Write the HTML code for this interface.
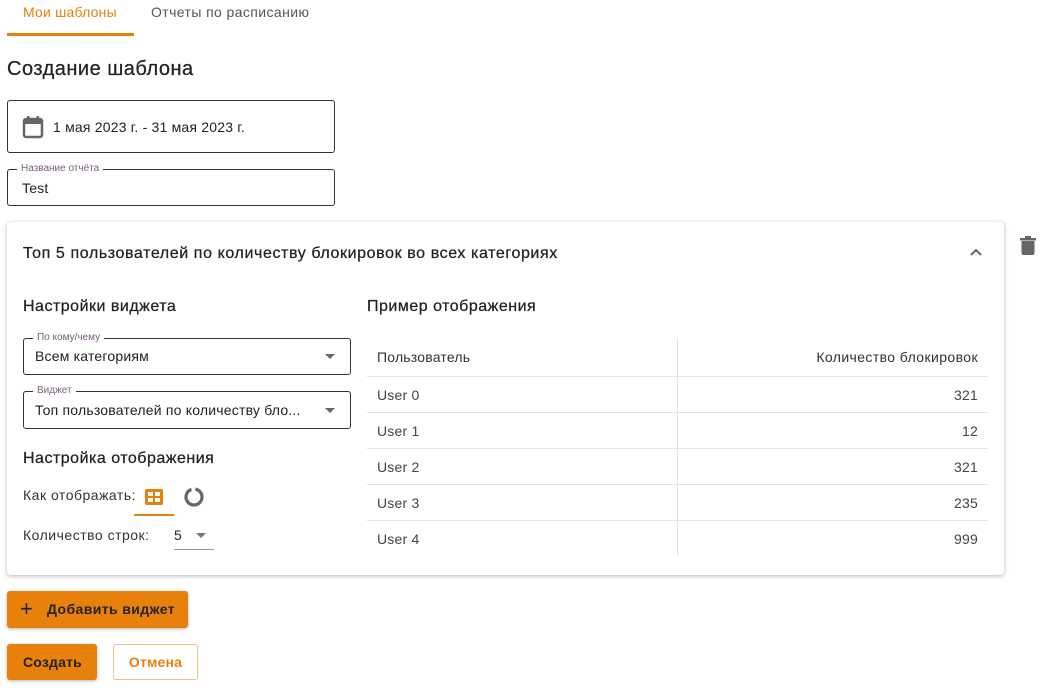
<!DOCTYPE html><html><head><meta charset="utf-8"><style>
*{box-sizing:border-box}body{margin:0;width:1041px;height:688px;background:#fff;font-family:"Liberation Sans",sans-serif;color:#222;position:relative;overflow:hidden;letter-spacing:0.2px}
.a{position:absolute;white-space:nowrap}
.h{font-weight:500;letter-spacing:0.5px;-webkit-text-stroke:0.25px #222}
.box{position:absolute;border:1px solid #333;border-radius:3px}
.lbl{position:absolute;top:-7px;left:9px;background:#fff;padding:0 4px;font-size:10px;color:#77607a;letter-spacing:0}
.row{position:absolute;left:367px;width:621px;height:36px;border-bottom:1px solid #e2e2e2;font-size:14px;color:#444}
.row span{position:absolute;top:10px}
.btn{position:absolute;background:#e8800c;border-radius:3px;font-weight:bold;font-size:14px;color:#222;box-shadow:0 1px 3px rgba(0,0,0,.3)}
</style></head><body>
<div class="a" style="left:23px;top:4px;font-size:14px;color:#e8800c">Мои шаблоны</div>
<div class="a" style="left:151px;top:4px;font-size:14px;color:#555;letter-spacing:0.4px">Отчеты по расписанию</div>
<div class="a" style="left:7px;top:33px;width:127px;height:3px;background:#e8800c"></div>
<div class="a h" style="left:7px;top:58px;font-size:20px;color:#222">Создание шаблона</div>
<div class="box" style="left:7px;top:100px;width:328px;height:53px">
<svg class="a" style="left:14px;top:14px" width="22" height="24" viewBox="0 0 22 24"><rect x="2" y="4" width="18" height="18" rx="2" fill="none" stroke="#666" stroke-width="2.5"/><rect x="2" y="4" width="18" height="5" fill="#666"/><rect x="5" y="1" width="2.5" height="5" fill="#666"/><rect x="14.5" y="1" width="2.5" height="5" fill="#666"/></svg>
<div class="a" style="left:45px;top:18px;font-size:14px">1 мая 2023 г. - 31 мая 2023 г.</div></div>
<div class="box" style="left:7px;top:169px;width:328px;height:37px"><div class="lbl">Название отчёта</div><div class="a" style="left:14px;top:10px;font-size:14px">Test</div></div>
<div class="a" style="left:7px;top:222px;width:997px;height:353px;border-radius:4px;box-shadow:0 1px 4px rgba(0,0,0,.3)"></div>
<div class="a h" style="left:23px;top:245px;font-size:16px;letter-spacing:0.6px">Топ 5 пользователей по количеству блокировок во всех категориях</div>
<svg class="a" style="left:969px;top:248px" width="14" height="10"><path d="M2 7 L7 2 L12 7" fill="none" stroke="#555" stroke-width="1.8"/></svg>
<svg class="a" style="left:1020px;top:236px" width="16" height="20"><rect x="0" y="2" width="16" height="2.5" fill="#666"/><rect x="5" y="0" width="6" height="3" fill="#666"/><path d="M1.5 5 H14.5 V17 Q14.5 19 12.5 19 H3.5 Q1.5 19 1.5 17Z" fill="#666"/></svg>
<div class="a h" style="left:23px;top:298px;font-size:16px">Настройки виджета</div>
<div class="box" style="left:23px;top:338px;width:328px;height:37px"><div class="lbl">По кому/чему</div><div class="a" style="left:11px;top:9px;font-size:14px">Всем категориям</div><div class="a" style="left:301px;top:15px;border:5px solid transparent;border-top:5px solid #666"></div></div>
<div class="box" style="left:23px;top:391px;width:328px;height:38px"><div class="lbl">Виджет</div><div class="a" style="left:11px;top:10px;font-size:14px">Топ пользователей по количеству бло...</div><div class="a" style="left:301px;top:16px;border:5px solid transparent;border-top:5px solid #666"></div></div>
<div class="a h" style="left:23px;top:450px;font-size:16px">Настройка отображения</div>
<div class="a" style="left:23px;top:487px;font-size:14px;color:#333;letter-spacing:0.5px">Как отображать:</div>
<svg class="a" style="left:144px;top:488px" width="20" height="18"><rect x="1" y="1" width="18" height="16" rx="2" fill="#e8800c"/><rect x="4" y="4" width="5" height="4" fill="#fff"/><rect x="11" y="4" width="5" height="4" fill="#fff"/><rect x="4" y="10" width="5" height="4" fill="#fff"/><rect x="11" y="10" width="5" height="4" fill="#fff"/></svg>
<div class="a" style="left:134px;top:514px;width:40px;height:2px;background:#e8800c"></div>
<svg class="a" style="left:183px;top:486px" width="22" height="22"><circle cx="11" cy="11" r="8" fill="none" stroke="#666" stroke-width="3.2" stroke-dasharray="46 4.3" transform="rotate(-80 11 11)"/></svg>
<div class="a" style="left:23px;top:527px;font-size:14px;color:#333;letter-spacing:0.5px">Количество строк:</div>
<div class="a" style="left:174px;top:527px;font-size:14px">5</div>
<div class="a" style="left:196px;top:533px;border:5px solid transparent;border-top:5px solid #777"></div>
<div class="a" style="left:174px;top:549px;width:40px;height:1px;background:#999"></div>
<div class="a h" style="left:367px;top:298px;font-size:16px">Пример отображения</div>
<div class="row" style="top:338px;height:39px;color:#333"><span style="left:10px;top:11px">Пользователь</span><span style="right:10px;top:11px;letter-spacing:0.4px">Количество блокировок</span></div>
<div class="row" style="top:377px"><span style="left:10px">User 0</span><span style="right:10px">321</span></div>
<div class="row" style="top:413px"><span style="left:10px">User 1</span><span style="right:10px">12</span></div>
<div class="row" style="top:449px"><span style="left:10px">User 2</span><span style="right:10px">321</span></div>
<div class="row" style="top:485px"><span style="left:10px">User 3</span><span style="right:10px">235</span></div>
<div class="row" style="top:521px;border:none"><span style="left:10px">User 4</span><span style="right:10px">999</span></div>
<div class="a" style="left:677px;top:338px;width:1px;height:218px;background:#e2e2e2"></div>
<div class="btn" style="left:7px;top:591px;width:181px;height:37px"><span class="a" style="left:13px;top:5px;font-size:22px;font-weight:normal">+</span><span class="a" style="left:40px;top:10px;letter-spacing:0.4px">Добавить виджет</span></div>
<div class="btn" style="left:7px;top:644px;width:90px;height:36px"><span class="a" style="left:16px;top:10px">Создать</span></div>
<div class="a" style="left:113px;top:644px;width:85px;height:36px;border:1px solid #f0c08a;border-radius:3px;color:#e8800c;font-weight:bold;font-size:14px;text-align:center;line-height:34px">Отмена</div>
</body></html>
